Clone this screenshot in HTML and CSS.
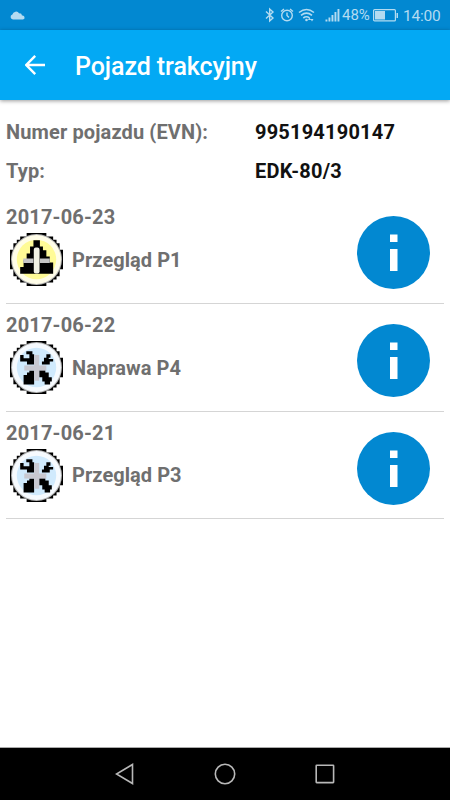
FILE: index.html
```
<!DOCTYPE html>
<html lang="pl">

<head>
    <meta charset="UTF-8">
    <meta name="viewport" content="width=device-width, initial-scale=1.0">
    <title>Pojazd trakcyjny</title>
    <link rel="stylesheet" href="styles.css">
</head>

<body>
    <svg class="defs" width="0" height="0">
        <!-- pixel disc shared by the record icons -->
        <symbol id="disc" viewBox="18 15 156 156">
            <path d="M67 15H125V25H145V35H155V45H164V64H174V122H164V142H155V152H145V161H125V171H67V161H48V152H38V142H28V122H18V64H28V45H38V35H48V25H67Z" fill="#000" />
            <circle cx="96" cy="93" r="75" fill="#b4b4b4" />
            <circle cx="96" cy="93" r="72" />
        </symbol>
        <symbol id="wrench" viewBox="18 15 156 156">
            <use href="#disc" x="18" y="15" width="156" height="156" fill="#f6fafe" />
            <circle cx="96" cy="93" r="58" fill="#d0eafd" />
            <path d="M66 45H84V54H89V84H68V75H48V56H58V66H75V54H66Z" fill="#000" />
            <path d="M125 54H137V64H132V68H145V75H135V84H112V75H118V64H125Z" fill="#000" />
            <path d="M75 102H89V143H58V124H58V115H68V108H75Z" fill="#000" />
            <path d="M104 101H122V108H132V122H141V134H136V143H120V134H113V122H104Z" fill="#000" />
            <path d="M60 87H125V102H60Z" fill="#c8c8d0" />
            <path d="M89 56H104V132H89Z" fill="#c8c8d0" />
        </symbol>
        <symbol id="warning" viewBox="18 15 156 156">
            <use href="#disc" x="18" y="15" width="156" height="156" fill="#fffde8" />
            <circle cx="96" cy="93" r="58" fill="#fffb96" />
            <path d="M87 36H106V55H115V66H125V84H135V102H145V135H48V115H58V95H67V75H77V55H87Z" fill="#000" />
            <path d="M57 90H87V103H57ZM106 90H135V103H106Z" fill="#c4c4c4" />
            <rect x="88" y="58" width="17" height="76" rx="6" fill="#f2f2e4" />
        </symbol>
        <symbol id="info" viewBox="0 0 73 73">
            <circle cx="36.5" cy="36.5" r="36.5" fill="#0288d1" />
            <path d="M33 18.500H40.500V26H33ZM33 33H40.500V55H33Z" fill="#fff" />
        </symbol>
    </svg>

    <div class="status-bar">
        <svg class="cloud" width="15" height="9" viewBox="0 0 15 9">
            <path d="M3 8.500A2.500 2.500 0 0 1 2.400 3.600A3.700 3.700 0 0 1 9.200 2.400A2.500 2.500 0 0 1 12 4.500A2 2 0 0 1 13 8.500Z" />
        </svg>
        <svg class="status-icons" width="77" height="16" viewBox="0 0 77 16">
            <g fill="none" stroke="#b3dbf1" stroke-width="1.400">
                <path d="M1 4.500L8 11L4.700 14V2L8 5L1 11.500" />
                <circle cx="22" cy="8.500" r="5.300" />
                <path d="M22 5.500V8.500L24 10.500M16 4.500L19 2M25 2L28 4.500" />
                <path d="M34 5.500Q41.500 -.500 49 5.500M36 8.300Q41.500 4 47 8.300M38.300 11Q41.500 8.500 44.500 11" stroke-width="1.600" />
            </g>
            <g fill="#b3dbf1">
                <circle cx="41.500" cy="13" r="1.300" />
                <path d="M44.500 10.500L46 13H43ZM47 14.500L45.500 12H48.500Z" />
                <path d="M60.500 12.500h1.900v2h-1.900zM63.500 10.500h1.900v4h-1.900zM66.500 8h1.900v6.500h-1.900zM69.500 5h1.900v9.500h-1.900zM72.500 2h1.900v12.500h-1.900z" />
            </g>
        </svg>
        <span class="percent">48%</span>
        <svg class="battery" width="26" height="13" viewBox="0 0 26 13">
            <rect x=".600" y=".600" width="21.800" height="11.300" rx="1" fill="none" stroke="#b3dbf1" stroke-width="1.200" />
            <path d="M2 2H12V10.500H2ZM23.500 4H25V9H23.500Z" fill="#b3dbf1" />
        </svg>
        <span class="clock">14:00</span>
    </div>

    <div class="toolbar">
        <svg class="back" width="20" height="20" viewBox="0 0 20 20">
            <path d="M20 10H1.500M10.200 .900L1.300 10L10.200 19.100" fill="none" stroke="#fff" stroke-width="2.400" />
        </svg>
        <h1>Pojazd trakcyjny</h1>
    </div>

    <main>
        <div class="details">
            <span class="label">Numer pojazdu (EVN):</span>
            <span class="value">995194190147</span>
            <span class="label">Typ:</span>
            <span class="value">EDK-80/3</span>
        </div>

        <div class="record">
            <div class="record-info">
                <div class="date">2017-06-23</div>
                <div class="type">
                    <svg width="53" height="53"><use href="#warning" /></svg>
                    <span>Przegląd P1</span>
                </div>
            </div>
            <svg class="info" width="73" height="73"><use href="#info" /></svg>
        </div>
        <div class="record">
            <div class="record-info">
                <div class="date">2017-06-22</div>
                <div class="type">
                    <svg width="53" height="53"><use href="#wrench" /></svg>
                    <span>Naprawa P4</span>
                </div>
            </div>
            <svg class="info" width="73" height="73"><use href="#info" /></svg>
        </div>
        <div class="record">
            <div class="record-info">
                <div class="date">2017-06-21</div>
                <div class="type">
                    <svg width="53" height="53"><use href="#wrench" /></svg>
                    <span>Przegląd P3</span>
                </div>
            </div>
            <svg class="info" width="73" height="73"><use href="#info" /></svg>
        </div>
    </main>

    <div class="nav-bar">
        <svg width="20" height="22" viewBox="0 0 20 22">
            <path d="M17.500 1.500V20.500L1.500 11Z" />
        </svg>
        <svg width="22" height="22" viewBox="0 0 22 22">
            <circle cx="11" cy="11" r="9.700" />
        </svg>
        <svg width="20" height="20" viewBox="0 0 20 20">
            <rect x="1.200" y="1.200" width="17.400" height="17.400" rx=".500" />
        </svg>
    </div>
</body>

</html>
```
FILE: styles.css
```
body {
    margin: 0;
    height: 800px;
    display: flex;
    flex-direction: column;
    font-family: Roboto, sans-serif;
    background: #fff;
    overflow: hidden;
}

svg {
    display: block;
    flex: none;
}

.defs {
    position: absolute;
}

.status-bar {
    height: 30px;
    box-sizing: border-box;
    padding: 0 10px;
    display: flex;
    align-items: center;
    background: #0288d1;
    color: #b3dbf1;
    font-size: 15px;
}

.cloud {
    fill: #b3dbf1;
    margin-right: auto;
}

.percent {
    width: 31px;
    font-size: 15px;
}

.battery {
    margin-right: 4px;
}

.clock {
    width: 37px;
    letter-spacing: -0.2px;
    font-size: 15.500px;
    padding-top: 1px;
}

.toolbar {
    height: 70px;
    box-sizing: border-box;
    padding: 0 25px;
    display: flex;
    align-items: center;
    gap: 30px;
    background: #03a9f4;
    box-shadow: 0 1px 4px rgba(0, 0, 0, 0.4);
}

h1 {
    margin: 3px 0 0;
    color: #fff;
    font-size: 25px;
    font-weight: 500;
    line-height: 31px;
    letter-spacing: -0.08px;
    white-space: nowrap;
}

main {
    flex: 1;
    padding: 13px 6px 0;
    font-size: 20px;
    font-weight: 700;
    letter-spacing: 0.12px;
    color: #6f6f6f;
}

.details {
    display: grid;
    grid-template-columns: 249px 1fr;
    grid-auto-rows: 39px;
    line-height: 39px;
}

.value {
    color: #111;
    letter-spacing: 0.2px;
}

.record {
    height: 107.500px;
    box-sizing: border-box;
    padding: 9px 14px 0 0;
    display: flex;
    justify-content: space-between;
    border-bottom: 1px solid #d5d5d5;
}

.details + .record {
    height: 113px;
    padding-top: 14px;
}

.date {
    line-height: 24px;
    letter-spacing: 0.18px;
}

.type {
    display: flex;
    align-items: center;
    gap: 9px;
    padding: 4px 0 0 4px;
    letter-spacing: 0.05px;
}

.info {
    margin-top: 11px;
}

.nav-bar {
    height: 53px;
    box-sizing: border-box;
    border-top: 1px solid #aaa;
    background: #000;
    display: flex;
    justify-content: center;
    align-items: center;
    gap: 79px;
}

.nav-bar svg {
    fill: none;
    stroke: #b8b8b8;
    stroke-width: 1.600;
}
```
